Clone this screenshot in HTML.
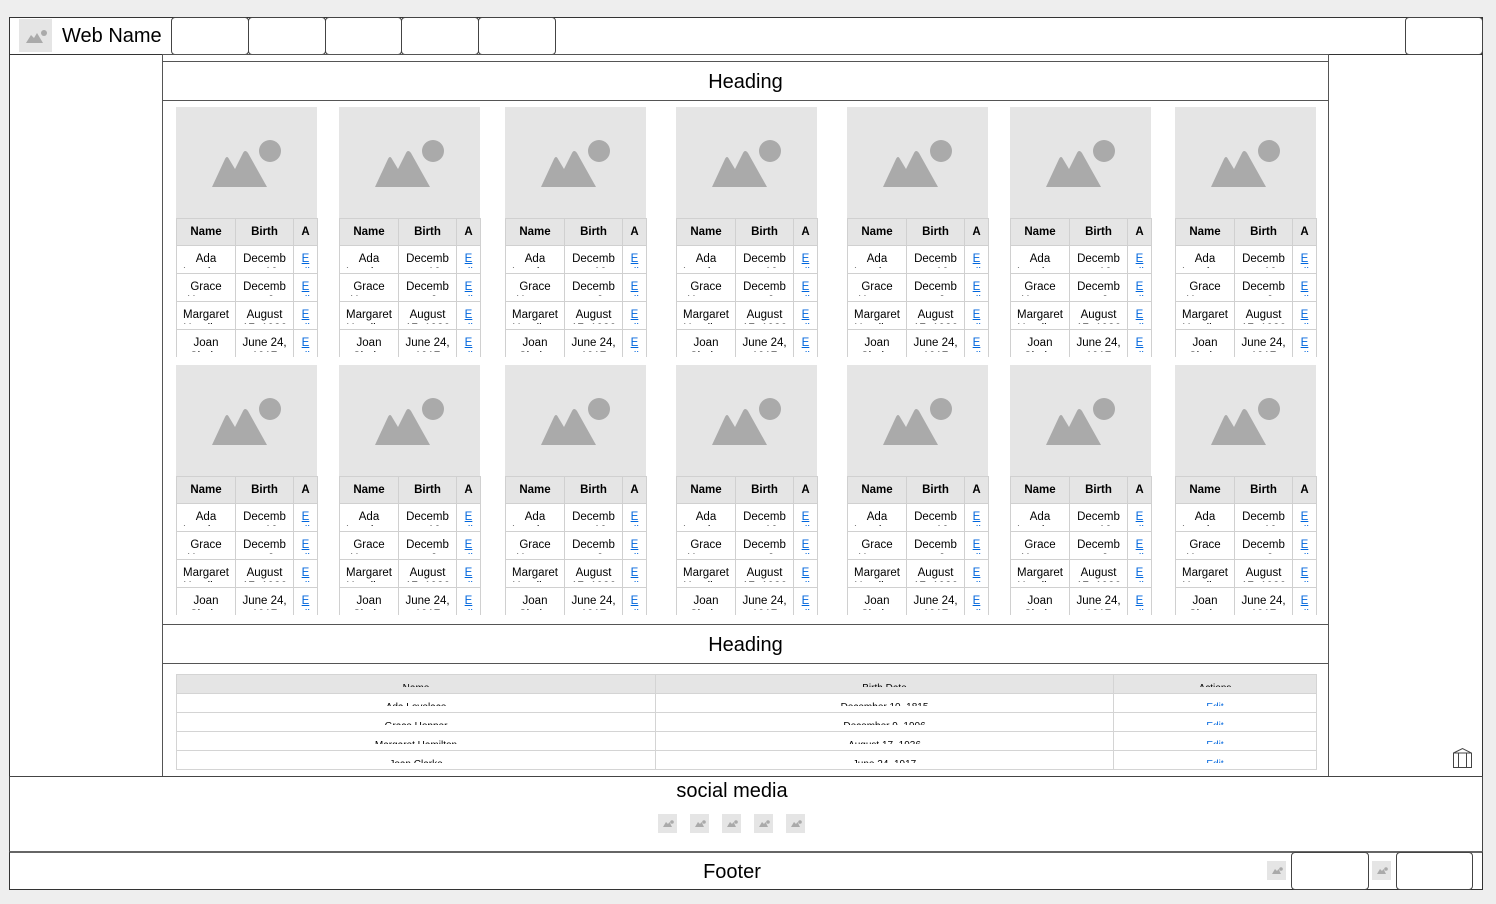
<!DOCTYPE html>
<html><head><meta charset="utf-8"><style>
*{box-sizing:border-box;margin:0;padding:0}
body{width:1496px;height:904px;background:#eeeeee;position:relative;overflow:hidden;font-family:"Liberation Sans",Arial,sans-serif;color:#000}
.a{position:absolute}
.frame{left:9px;top:17px;width:1474px;height:873px;background:#fff;border:1px solid #333}
.btn{position:absolute;border:1px solid #444;border-radius:4px;background:#fff}
.ph{position:absolute;background:#e5e5e5}
.card{position:absolute;width:142px;height:250px;background:#fff;overflow:hidden}
.card .img{height:111px;width:141px;background:#e5e5e5}
.card table{border-collapse:collapse;width:141px;table-layout:fixed;font-size:11.5px}
.card td{border:1px solid #d0d0d0;text-align:center;padding:0;vertical-align:top;height:28px}
.card tr.h td{background:#e5e5e5;font-weight:bold;height:27px}
.card .c{height:22px;overflow:hidden;line-height:14px;padding:6px 4px 0;overflow-wrap:anywhere;word-break:break-all}
.card tr.h .c{padding-top:6px;height:19px}
.card td:nth-child(3) .c{padding-left:7px;padding-right:7px}
.card td.n .c{word-break:normal;overflow-wrap:anywhere}
.card a{color:#0066dd;text-decoration:underline}
.bt{position:absolute;left:176px;top:674px;width:1140px;border-collapse:collapse;table-layout:fixed;font-size:10px}
.bt td{border:1px solid #d4d4d4;text-align:center;height:19px;padding:0;vertical-align:top}
.bt tr.h td{background:#e5e5e5}
.bt .c{height:12px;overflow:hidden;padding-top:8px;line-height:12px}
.bt .c span{display:block;height:4px;overflow:hidden;line-height:11px}
.bt a{color:#0066dd}
</style></head><body>
<div class="a frame"></div>
<div class="a" style="left:9px;top:17px;width:1474px;height:38px;border:1px solid #333;background:#fff"></div>
<div class="ph" style="left:19px;top:19px;width:33px;height:33px"><svg width="33" height="33"><path d="M7 24 L12 16 L15 19 L18 14 L24 24 Z" fill="#aaa"/><circle cx="25" cy="14" r="3" fill="#aaa"/></svg></div>
<div class="a" style="left:62px;top:25px;font-size:20px">Web Name</div>
<div class="btn" style="left:171px;top:17px;width:78px;height:38px"></div>
<div class="btn" style="left:248px;top:17px;width:78px;height:38px"></div>
<div class="btn" style="left:325px;top:17px;width:77px;height:38px"></div>
<div class="btn" style="left:401px;top:17px;width:78px;height:38px"></div>
<div class="btn" style="left:478px;top:17px;width:78px;height:38px"></div>
<div class="btn" style="left:1405px;top:17px;width:78px;height:38px"></div>
<div class="a" style="left:162px;top:54px;width:1167px;height:723px;border:1px solid #555;background:#fff"></div>
<div class="a" style="left:162px;top:61px;width:1167px;height:40px;border-top:1px solid #555;border-bottom:1px solid #555;text-align:center;font-size:20px;line-height:40px">Heading</div>
<div class="a" style="left:162px;top:624px;width:1167px;height:40px;border-top:1px solid #555;border-bottom:1px solid #555;text-align:center;font-size:20px;line-height:40px">Heading</div>

<!-- cards row 1 -->
<div class="card" style="left:176px;top:107px"><div class="img"><svg width="141" height="111"><path d="M36 80 L49 52 Q51 48 53 52 L59 62 L67 46 Q69 42 72 46 L91 80 Z" fill="#aaa"/><circle cx="94" cy="44" r="11" fill="#aaa"/></svg></div><table><colgroup><col style="width:59px"><col style="width:58px"><col style="width:24px"></colgroup><tr class="h"><td class="n"><div class="c">Name</div></td><td class="n"><div class="c">Birth Date</div></td><td><div class="c">Actions</div></td></tr><tr><td class="n"><div class="c">Ada Lovelace</div></td><td><div class="c">December 10</div></td><td><div class="c"><a>Edit</a></div></td></tr><tr><td class="n"><div class="c">Grace Hopper</div></td><td><div class="c">December 9</div></td><td><div class="c"><a>Edit</a></div></td></tr><tr><td class="n"><div class="c">Margaret Hamilton</div></td><td class="n"><div class="c">August 17, 1936</div></td><td><div class="c"><a>Edit</a></div></td></tr><tr><td class="n"><div class="c">Joan Clarke</div></td><td class="n"><div class="c">June 24, 1917</div></td><td><div class="c"><a>Edit</a></div></td></tr></table></div>
<div class="card" style="left:339px;top:107px"><div class="img"><svg width="141" height="111"><path d="M36 80 L49 52 Q51 48 53 52 L59 62 L67 46 Q69 42 72 46 L91 80 Z" fill="#aaa"/><circle cx="94" cy="44" r="11" fill="#aaa"/></svg></div><table><colgroup><col style="width:59px"><col style="width:58px"><col style="width:24px"></colgroup><tr class="h"><td class="n"><div class="c">Name</div></td><td class="n"><div class="c">Birth Date</div></td><td><div class="c">Actions</div></td></tr><tr><td class="n"><div class="c">Ada Lovelace</div></td><td><div class="c">December 10</div></td><td><div class="c"><a>Edit</a></div></td></tr><tr><td class="n"><div class="c">Grace Hopper</div></td><td><div class="c">December 9</div></td><td><div class="c"><a>Edit</a></div></td></tr><tr><td class="n"><div class="c">Margaret Hamilton</div></td><td class="n"><div class="c">August 17, 1936</div></td><td><div class="c"><a>Edit</a></div></td></tr><tr><td class="n"><div class="c">Joan Clarke</div></td><td class="n"><div class="c">June 24, 1917</div></td><td><div class="c"><a>Edit</a></div></td></tr></table></div>
<div class="card" style="left:505px;top:107px"><div class="img"><svg width="141" height="111"><path d="M36 80 L49 52 Q51 48 53 52 L59 62 L67 46 Q69 42 72 46 L91 80 Z" fill="#aaa"/><circle cx="94" cy="44" r="11" fill="#aaa"/></svg></div><table><colgroup><col style="width:59px"><col style="width:58px"><col style="width:24px"></colgroup><tr class="h"><td class="n"><div class="c">Name</div></td><td class="n"><div class="c">Birth Date</div></td><td><div class="c">Actions</div></td></tr><tr><td class="n"><div class="c">Ada Lovelace</div></td><td><div class="c">December 10</div></td><td><div class="c"><a>Edit</a></div></td></tr><tr><td class="n"><div class="c">Grace Hopper</div></td><td><div class="c">December 9</div></td><td><div class="c"><a>Edit</a></div></td></tr><tr><td class="n"><div class="c">Margaret Hamilton</div></td><td class="n"><div class="c">August 17, 1936</div></td><td><div class="c"><a>Edit</a></div></td></tr><tr><td class="n"><div class="c">Joan Clarke</div></td><td class="n"><div class="c">June 24, 1917</div></td><td><div class="c"><a>Edit</a></div></td></tr></table></div>
<div class="card" style="left:676px;top:107px"><div class="img"><svg width="141" height="111"><path d="M36 80 L49 52 Q51 48 53 52 L59 62 L67 46 Q69 42 72 46 L91 80 Z" fill="#aaa"/><circle cx="94" cy="44" r="11" fill="#aaa"/></svg></div><table><colgroup><col style="width:59px"><col style="width:58px"><col style="width:24px"></colgroup><tr class="h"><td class="n"><div class="c">Name</div></td><td class="n"><div class="c">Birth Date</div></td><td><div class="c">Actions</div></td></tr><tr><td class="n"><div class="c">Ada Lovelace</div></td><td><div class="c">December 10</div></td><td><div class="c"><a>Edit</a></div></td></tr><tr><td class="n"><div class="c">Grace Hopper</div></td><td><div class="c">December 9</div></td><td><div class="c"><a>Edit</a></div></td></tr><tr><td class="n"><div class="c">Margaret Hamilton</div></td><td class="n"><div class="c">August 17, 1936</div></td><td><div class="c"><a>Edit</a></div></td></tr><tr><td class="n"><div class="c">Joan Clarke</div></td><td class="n"><div class="c">June 24, 1917</div></td><td><div class="c"><a>Edit</a></div></td></tr></table></div>
<div class="card" style="left:847px;top:107px"><div class="img"><svg width="141" height="111"><path d="M36 80 L49 52 Q51 48 53 52 L59 62 L67 46 Q69 42 72 46 L91 80 Z" fill="#aaa"/><circle cx="94" cy="44" r="11" fill="#aaa"/></svg></div><table><colgroup><col style="width:59px"><col style="width:58px"><col style="width:24px"></colgroup><tr class="h"><td class="n"><div class="c">Name</div></td><td class="n"><div class="c">Birth Date</div></td><td><div class="c">Actions</div></td></tr><tr><td class="n"><div class="c">Ada Lovelace</div></td><td><div class="c">December 10</div></td><td><div class="c"><a>Edit</a></div></td></tr><tr><td class="n"><div class="c">Grace Hopper</div></td><td><div class="c">December 9</div></td><td><div class="c"><a>Edit</a></div></td></tr><tr><td class="n"><div class="c">Margaret Hamilton</div></td><td class="n"><div class="c">August 17, 1936</div></td><td><div class="c"><a>Edit</a></div></td></tr><tr><td class="n"><div class="c">Joan Clarke</div></td><td class="n"><div class="c">June 24, 1917</div></td><td><div class="c"><a>Edit</a></div></td></tr></table></div>
<div class="card" style="left:1010px;top:107px"><div class="img"><svg width="141" height="111"><path d="M36 80 L49 52 Q51 48 53 52 L59 62 L67 46 Q69 42 72 46 L91 80 Z" fill="#aaa"/><circle cx="94" cy="44" r="11" fill="#aaa"/></svg></div><table><colgroup><col style="width:59px"><col style="width:58px"><col style="width:24px"></colgroup><tr class="h"><td class="n"><div class="c">Name</div></td><td class="n"><div class="c">Birth Date</div></td><td><div class="c">Actions</div></td></tr><tr><td class="n"><div class="c">Ada Lovelace</div></td><td><div class="c">December 10</div></td><td><div class="c"><a>Edit</a></div></td></tr><tr><td class="n"><div class="c">Grace Hopper</div></td><td><div class="c">December 9</div></td><td><div class="c"><a>Edit</a></div></td></tr><tr><td class="n"><div class="c">Margaret Hamilton</div></td><td class="n"><div class="c">August 17, 1936</div></td><td><div class="c"><a>Edit</a></div></td></tr><tr><td class="n"><div class="c">Joan Clarke</div></td><td class="n"><div class="c">June 24, 1917</div></td><td><div class="c"><a>Edit</a></div></td></tr></table></div>
<div class="card" style="left:1175px;top:107px"><div class="img"><svg width="141" height="111"><path d="M36 80 L49 52 Q51 48 53 52 L59 62 L67 46 Q69 42 72 46 L91 80 Z" fill="#aaa"/><circle cx="94" cy="44" r="11" fill="#aaa"/></svg></div><table><colgroup><col style="width:59px"><col style="width:58px"><col style="width:24px"></colgroup><tr class="h"><td class="n"><div class="c">Name</div></td><td class="n"><div class="c">Birth Date</div></td><td><div class="c">Actions</div></td></tr><tr><td class="n"><div class="c">Ada Lovelace</div></td><td><div class="c">December 10</div></td><td><div class="c"><a>Edit</a></div></td></tr><tr><td class="n"><div class="c">Grace Hopper</div></td><td><div class="c">December 9</div></td><td><div class="c"><a>Edit</a></div></td></tr><tr><td class="n"><div class="c">Margaret Hamilton</div></td><td class="n"><div class="c">August 17, 1936</div></td><td><div class="c"><a>Edit</a></div></td></tr><tr><td class="n"><div class="c">Joan Clarke</div></td><td class="n"><div class="c">June 24, 1917</div></td><td><div class="c"><a>Edit</a></div></td></tr></table></div>
<!-- cards row 2 -->
<div class="card" style="left:176px;top:365px"><div class="img"><svg width="141" height="111"><path d="M36 80 L49 52 Q51 48 53 52 L59 62 L67 46 Q69 42 72 46 L91 80 Z" fill="#aaa"/><circle cx="94" cy="44" r="11" fill="#aaa"/></svg></div><table><colgroup><col style="width:59px"><col style="width:58px"><col style="width:24px"></colgroup><tr class="h"><td class="n"><div class="c">Name</div></td><td class="n"><div class="c">Birth Date</div></td><td><div class="c">Actions</div></td></tr><tr><td class="n"><div class="c">Ada Lovelace</div></td><td><div class="c">December 10</div></td><td><div class="c"><a>Edit</a></div></td></tr><tr><td class="n"><div class="c">Grace Hopper</div></td><td><div class="c">December 9</div></td><td><div class="c"><a>Edit</a></div></td></tr><tr><td class="n"><div class="c">Margaret Hamilton</div></td><td class="n"><div class="c">August 17, 1936</div></td><td><div class="c"><a>Edit</a></div></td></tr><tr><td class="n"><div class="c">Joan Clarke</div></td><td class="n"><div class="c">June 24, 1917</div></td><td><div class="c"><a>Edit</a></div></td></tr></table></div>
<div class="card" style="left:339px;top:365px"><div class="img"><svg width="141" height="111"><path d="M36 80 L49 52 Q51 48 53 52 L59 62 L67 46 Q69 42 72 46 L91 80 Z" fill="#aaa"/><circle cx="94" cy="44" r="11" fill="#aaa"/></svg></div><table><colgroup><col style="width:59px"><col style="width:58px"><col style="width:24px"></colgroup><tr class="h"><td class="n"><div class="c">Name</div></td><td class="n"><div class="c">Birth Date</div></td><td><div class="c">Actions</div></td></tr><tr><td class="n"><div class="c">Ada Lovelace</div></td><td><div class="c">December 10</div></td><td><div class="c"><a>Edit</a></div></td></tr><tr><td class="n"><div class="c">Grace Hopper</div></td><td><div class="c">December 9</div></td><td><div class="c"><a>Edit</a></div></td></tr><tr><td class="n"><div class="c">Margaret Hamilton</div></td><td class="n"><div class="c">August 17, 1936</div></td><td><div class="c"><a>Edit</a></div></td></tr><tr><td class="n"><div class="c">Joan Clarke</div></td><td class="n"><div class="c">June 24, 1917</div></td><td><div class="c"><a>Edit</a></div></td></tr></table></div>
<div class="card" style="left:505px;top:365px"><div class="img"><svg width="141" height="111"><path d="M36 80 L49 52 Q51 48 53 52 L59 62 L67 46 Q69 42 72 46 L91 80 Z" fill="#aaa"/><circle cx="94" cy="44" r="11" fill="#aaa"/></svg></div><table><colgroup><col style="width:59px"><col style="width:58px"><col style="width:24px"></colgroup><tr class="h"><td class="n"><div class="c">Name</div></td><td class="n"><div class="c">Birth Date</div></td><td><div class="c">Actions</div></td></tr><tr><td class="n"><div class="c">Ada Lovelace</div></td><td><div class="c">December 10</div></td><td><div class="c"><a>Edit</a></div></td></tr><tr><td class="n"><div class="c">Grace Hopper</div></td><td><div class="c">December 9</div></td><td><div class="c"><a>Edit</a></div></td></tr><tr><td class="n"><div class="c">Margaret Hamilton</div></td><td class="n"><div class="c">August 17, 1936</div></td><td><div class="c"><a>Edit</a></div></td></tr><tr><td class="n"><div class="c">Joan Clarke</div></td><td class="n"><div class="c">June 24, 1917</div></td><td><div class="c"><a>Edit</a></div></td></tr></table></div>
<div class="card" style="left:676px;top:365px"><div class="img"><svg width="141" height="111"><path d="M36 80 L49 52 Q51 48 53 52 L59 62 L67 46 Q69 42 72 46 L91 80 Z" fill="#aaa"/><circle cx="94" cy="44" r="11" fill="#aaa"/></svg></div><table><colgroup><col style="width:59px"><col style="width:58px"><col style="width:24px"></colgroup><tr class="h"><td class="n"><div class="c">Name</div></td><td class="n"><div class="c">Birth Date</div></td><td><div class="c">Actions</div></td></tr><tr><td class="n"><div class="c">Ada Lovelace</div></td><td><div class="c">December 10</div></td><td><div class="c"><a>Edit</a></div></td></tr><tr><td class="n"><div class="c">Grace Hopper</div></td><td><div class="c">December 9</div></td><td><div class="c"><a>Edit</a></div></td></tr><tr><td class="n"><div class="c">Margaret Hamilton</div></td><td class="n"><div class="c">August 17, 1936</div></td><td><div class="c"><a>Edit</a></div></td></tr><tr><td class="n"><div class="c">Joan Clarke</div></td><td class="n"><div class="c">June 24, 1917</div></td><td><div class="c"><a>Edit</a></div></td></tr></table></div>
<div class="card" style="left:847px;top:365px"><div class="img"><svg width="141" height="111"><path d="M36 80 L49 52 Q51 48 53 52 L59 62 L67 46 Q69 42 72 46 L91 80 Z" fill="#aaa"/><circle cx="94" cy="44" r="11" fill="#aaa"/></svg></div><table><colgroup><col style="width:59px"><col style="width:58px"><col style="width:24px"></colgroup><tr class="h"><td class="n"><div class="c">Name</div></td><td class="n"><div class="c">Birth Date</div></td><td><div class="c">Actions</div></td></tr><tr><td class="n"><div class="c">Ada Lovelace</div></td><td><div class="c">December 10</div></td><td><div class="c"><a>Edit</a></div></td></tr><tr><td class="n"><div class="c">Grace Hopper</div></td><td><div class="c">December 9</div></td><td><div class="c"><a>Edit</a></div></td></tr><tr><td class="n"><div class="c">Margaret Hamilton</div></td><td class="n"><div class="c">August 17, 1936</div></td><td><div class="c"><a>Edit</a></div></td></tr><tr><td class="n"><div class="c">Joan Clarke</div></td><td class="n"><div class="c">June 24, 1917</div></td><td><div class="c"><a>Edit</a></div></td></tr></table></div>
<div class="card" style="left:1010px;top:365px"><div class="img"><svg width="141" height="111"><path d="M36 80 L49 52 Q51 48 53 52 L59 62 L67 46 Q69 42 72 46 L91 80 Z" fill="#aaa"/><circle cx="94" cy="44" r="11" fill="#aaa"/></svg></div><table><colgroup><col style="width:59px"><col style="width:58px"><col style="width:24px"></colgroup><tr class="h"><td class="n"><div class="c">Name</div></td><td class="n"><div class="c">Birth Date</div></td><td><div class="c">Actions</div></td></tr><tr><td class="n"><div class="c">Ada Lovelace</div></td><td><div class="c">December 10</div></td><td><div class="c"><a>Edit</a></div></td></tr><tr><td class="n"><div class="c">Grace Hopper</div></td><td><div class="c">December 9</div></td><td><div class="c"><a>Edit</a></div></td></tr><tr><td class="n"><div class="c">Margaret Hamilton</div></td><td class="n"><div class="c">August 17, 1936</div></td><td><div class="c"><a>Edit</a></div></td></tr><tr><td class="n"><div class="c">Joan Clarke</div></td><td class="n"><div class="c">June 24, 1917</div></td><td><div class="c"><a>Edit</a></div></td></tr></table></div>
<div class="card" style="left:1175px;top:365px"><div class="img"><svg width="141" height="111"><path d="M36 80 L49 52 Q51 48 53 52 L59 62 L67 46 Q69 42 72 46 L91 80 Z" fill="#aaa"/><circle cx="94" cy="44" r="11" fill="#aaa"/></svg></div><table><colgroup><col style="width:59px"><col style="width:58px"><col style="width:24px"></colgroup><tr class="h"><td class="n"><div class="c">Name</div></td><td class="n"><div class="c">Birth Date</div></td><td><div class="c">Actions</div></td></tr><tr><td class="n"><div class="c">Ada Lovelace</div></td><td><div class="c">December 10</div></td><td><div class="c"><a>Edit</a></div></td></tr><tr><td class="n"><div class="c">Grace Hopper</div></td><td><div class="c">December 9</div></td><td><div class="c"><a>Edit</a></div></td></tr><tr><td class="n"><div class="c">Margaret Hamilton</div></td><td class="n"><div class="c">August 17, 1936</div></td><td><div class="c"><a>Edit</a></div></td></tr><tr><td class="n"><div class="c">Joan Clarke</div></td><td class="n"><div class="c">June 24, 1917</div></td><td><div class="c"><a>Edit</a></div></td></tr></table></div>

<table class="bt"><colgroup><col style="width:479px"><col style="width:458px"><col style="width:203px"></colgroup>
<tr class="h"><td><div class="c"><span>Name</span></div></td><td><div class="c"><span>Birth Date</span></div></td><td><div class="c"><span>Actions</span></div></td></tr>
<tr><td><div class="c"><span>Ada Lovelace</span></div></td><td><div class="c"><span>December 10, 1815</span></div></td><td><div class="c"><span><a>Edit</a></span></div></td></tr>
<tr><td><div class="c"><span>Grace Hopper</span></div></td><td><div class="c"><span>December 9, 1906</span></div></td><td><div class="c"><span><a>Edit</a></span></div></td></tr>
<tr><td><div class="c"><span>Margaret Hamilton</span></div></td><td><div class="c"><span>August 17, 1936</span></div></td><td><div class="c"><span><a>Edit</a></span></div></td></tr>
<tr><td><div class="c"><span>Joan Clarke</span></div></td><td><div class="c"><span>June 24, 1917</span></div></td><td><div class="c"><span><a>Edit</a></span></div></td></tr>
</table>

<svg class="a" style="left:1452px;top:747px" width="22" height="22"><path d="M1.5 6 L10.5 1.5 L19.5 6 L19.5 20.5 L1.5 20.5 Z M1.5 6 L19.5 6 M6.5 6 L6.5 20.5 M14.5 6 L14.5 20.5" fill="none" stroke="#444" stroke-width="1"/></svg>

<div class="a" style="left:9px;top:776px;width:1474px;height:77px;border:1px solid #444;background:#fff"></div>
<div class="a" style="left:0;top:780px;width:1464px;text-align:center;font-size:20px">social media</div>
<div class="ph" style="left:658px;top:814px;width:19px;height:19px"><svg width="19" height="19"><path d="M5 13 L8 8 L10 10 L11.5 8 L14 13 Z" fill="#aaa"/><circle cx="14" cy="8" r="1.8" fill="#aaa"/></svg></div>
<div class="ph" style="left:690px;top:814px;width:19px;height:19px"><svg width="19" height="19"><path d="M5 13 L8 8 L10 10 L11.5 8 L14 13 Z" fill="#aaa"/><circle cx="14" cy="8" r="1.8" fill="#aaa"/></svg></div>
<div class="ph" style="left:722px;top:814px;width:19px;height:19px"><svg width="19" height="19"><path d="M5 13 L8 8 L10 10 L11.5 8 L14 13 Z" fill="#aaa"/><circle cx="14" cy="8" r="1.8" fill="#aaa"/></svg></div>
<div class="ph" style="left:754px;top:814px;width:19px;height:19px"><svg width="19" height="19"><path d="M5 13 L8 8 L10 10 L11.5 8 L14 13 Z" fill="#aaa"/><circle cx="14" cy="8" r="1.8" fill="#aaa"/></svg></div>
<div class="ph" style="left:786px;top:814px;width:19px;height:19px"><svg width="19" height="19"><path d="M5 13 L8 8 L10 10 L11.5 8 L14 13 Z" fill="#aaa"/><circle cx="14" cy="8" r="1.8" fill="#aaa"/></svg></div>

<div class="a" style="left:9px;top:851px;width:1474px;height:39px;border:1px solid #333;border-top:2px solid #666;background:#fff"></div>
<div class="a" style="left:0;top:861px;width:1464px;text-align:center;font-size:20px">Footer</div>
<div class="ph" style="left:1267px;top:861px;width:19px;height:19px"><svg width="19" height="19"><path d="M5 13 L8 8 L10 10 L11.5 8 L14 13 Z" fill="#aaa"/><circle cx="14" cy="8" r="1.8" fill="#aaa"/></svg></div>
<div class="btn" style="left:1291px;top:852px;width:78px;height:38px"></div>
<div class="ph" style="left:1372px;top:861px;width:19px;height:19px"><svg width="19" height="19"><path d="M5 13 L8 8 L10 10 L11.5 8 L14 13 Z" fill="#aaa"/><circle cx="14" cy="8" r="1.8" fill="#aaa"/></svg></div>
<div class="btn" style="left:1396px;top:852px;width:77px;height:38px"></div>
</body></html>
